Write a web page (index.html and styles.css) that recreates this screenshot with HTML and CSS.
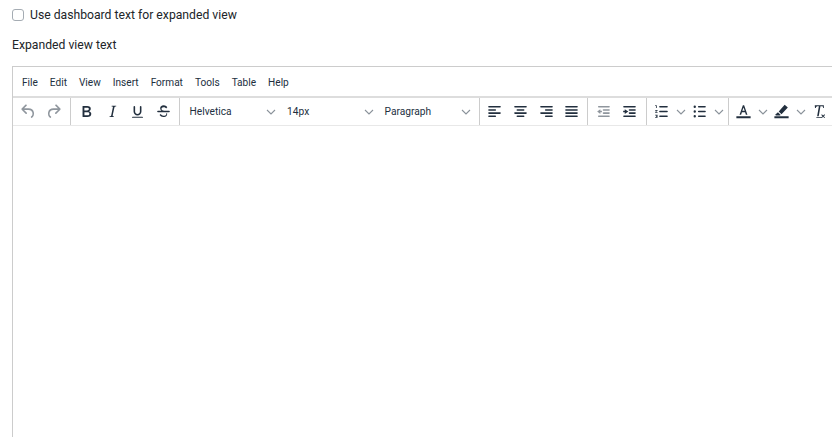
FILE: index.html
```html
<!DOCTYPE html>
<html lang="en">
<head>
    <meta charset="UTF-8">
    <title>Expanded view</title>
    <link rel="stylesheet" href="styles.css">
</head>
<body>
    <label class="check-row"><input type="checkbox" class="check-box"><span>Use dashboard text for expanded view</span></label>
    <div class="field-label">Expanded view text</div>

    <div class="editor">
        <div class="menubar">
            <span>File</span><span>Edit</span><span>View</span><span>Insert</span><span>Format</span><span>Tools</span><span>Table</span><span>Help</span>
        </div>
        <div class="toolbar">
            <div class="group">
                <button class="btn disabled"><svg viewBox="0 0 24 24"><path d="M6.400 8H12c3.700 0 6.200 2 6.800 5.100.6 2.700-.4 5.600-2.300 6.800a1 1 0 0 1-1-1.800c1.100-.6 1.800-2.700 1.400-4.600-.5-2.100-2.100-3.500-4.900-3.500H6.400l3.300 3.300a1 1 0 1 1-1.400 1.400l-5-5a1 1 0 0 1 0-1.400l5-5a1 1 0 0 1 1.400 1.400L6.400 8z"/></svg></button>
                <button class="btn disabled"><svg viewBox="0 0 24 24"><path d="M17.600 8H12c-3.700 0-6.200 2-6.800 5.100-.6 2.700.4 5.600 2.300 6.800a1 1 0 0 0 1-1.800c-1.100-.6-1.800-2.700-1.400-4.600.5-2.100 2.100-3.500 4.900-3.500h5.600l-3.300 3.300a1 1 0 1 0 1.400 1.400l5-5a1 1 0 0 0 0-1.400l-5-5a1 1 0 0 0-1.400 1.400L17.600 8z"/></svg></button>
            </div>
            <div class="group marks">
                <button class="btn"><svg viewBox="0 0 24 24"><path d="M7.800 19c-.3 0-.5 0-.6-.2l-.2-.5V5.700c0-.2 0-.4.2-.5l.6-.2h5c1.500 0 2.700.3 3.500 1 .7.6 1.100 1.400 1.100 2.500a3 3 0 0 1-.6 1.900c-.4.6-1 1-1.600 1.200.4.100.9.300 1.300.6s.8.7 1 1.200c.4.4.5 1 .5 1.600 0 1.300-.4 2.300-1.300 3-.8.7-2.100 1-3.800 1H7.800zm5-8.300c.6 0 1.200-.1 1.600-.5.4-.3.6-.7.6-1.300 0-1.100-.8-1.700-2.300-1.700H9.300v3.500h3.500zm.5 6c.7 0 1.300-.1 1.700-.4.4-.4.6-.9.6-1.500s-.2-1-.7-1.400c-.4-.3-1-.4-2-.4H9.400v3.800h3.900z"/></svg></button>
                <button class="btn"><svg viewBox="0 0 24 24"><path d="M16.700 4.700l-.1.900h-.3c-.6 0-1 0-1.400.3-.3.3-.4.6-.5 1.100l-2.100 9.800v.6c0 .5.4.8 1.400.8h.2l-.2.800H8l.2-.8h.2c1.100 0 1.800-.5 2-1.500l2-9.800.1-.5c0-.6-.4-.8-1.400-.8h-.3l.2-.9h5.800z"/></svg></button>
                <button class="btn"><svg viewBox="0 0 24 24"><path d="M16 5c.6 0 1 .4 1 1v6c0 2.800-2.200 5-5 5s-5-2.200-5-5V6c0-.6.4-1 1-1s1 .4 1 1v6c0 1.700 1.300 3 3 3s3-1.300 3-3V6c0-.6.4-1 1-1zM6 18.500h12c.6 0 1 .3 1 .8s-.4.7-1 .7H6c-.6 0-1-.2-1-.7s.4-.8 1-.8z"/></svg></button>
                <button class="btn"><svg viewBox="0 0 24 24"><path d="M15.600 8.500c-.5-.7-1-1.100-1.300-1.300-.6-.4-1.300-.6-2-.6-2.700 0-2.800 1.700-2.800 2.100 0 1.600 1.800 2 3.200 2.300h-3c-1-.6-1.900-1.500-1.900-3.200 0-2 1.400-3.800 4.500-3.800 1.100 0 2.100.3 3 .9.500.3 1 .9 1.500 1.600l-1.700 1.800zM5 11h14a1 1 0 0 1 0 2H5a1 1 0 0 1 0-2zm11.500 3.200c.1.300.1.600.1.900 0 1.400-.7 3.900-5 3.900A6.200 6.200 0 0 1 7 16.400l1.500-1.100c.4.600 1.600 2 3.700 2 1.600 0 2.500-.4 3-1 .3-.4.400-.9.300-2.100h1z"/></svg></button>
            </div>
            <div class="group selects">
                <div class="select"><span>Helvetica</span><svg class="chevron" viewBox="0 0 10 10"><path d="M1 3l4 4 4-4"/></svg></div>
                <div class="select"><span>14px</span><svg class="chevron" viewBox="0 0 10 10"><path d="M1 3l4 4 4-4"/></svg></div>
                <div class="select"><span>Paragraph</span><svg class="chevron" viewBox="0 0 10 10"><path d="M1 3l4 4 4-4"/></svg></div>
            </div>
            <div class="group">
                <button class="btn"><svg viewBox="0 0 24 24"><path d="M5 5h14a1 1 0 0 1 0 2H5a1 1 0 1 1 0-2zm0 4h8a1 1 0 0 1 0 2H5a1 1 0 1 1 0-2zm0 8h8a1 1 0 0 1 0 2H5a1 1 0 0 1 0-2zm0-4h14a1 1 0 0 1 0 2H5a1 1 0 0 1 0-2z"/></svg></button>
                <button class="btn"><svg viewBox="0 0 24 24"><path d="M5 5h14a1 1 0 0 1 0 2H5a1 1 0 1 1 0-2zm3 4h8a1 1 0 0 1 0 2H8a1 1 0 1 1 0-2zm0 8h8a1 1 0 0 1 0 2H8a1 1 0 0 1 0-2zm-3-4h14a1 1 0 0 1 0 2H5a1 1 0 0 1 0-2z"/></svg></button>
                <button class="btn"><svg viewBox="0 0 24 24"><path d="M5 5h14a1 1 0 0 1 0 2H5a1 1 0 1 1 0-2zm6 4h8a1 1 0 0 1 0 2h-8a1 1 0 0 1 0-2zm0 8h8a1 1 0 0 1 0 2h-8a1 1 0 0 1 0-2zm-6-4h14a1 1 0 0 1 0 2H5a1 1 0 0 1 0-2z"/></svg></button>
                <button class="btn"><svg viewBox="0 0 24 24"><path d="M5 5h14a1 1 0 0 1 0 2H5a1 1 0 1 1 0-2zm0 4h14a1 1 0 0 1 0 2H5a1 1 0 1 1 0-2zm0 4h14a1 1 0 0 1 0 2H5a1 1 0 0 1 0-2zm0 4h14a1 1 0 0 1 0 2H5a1 1 0 0 1 0-2z"/></svg></button>
            </div>
            <div class="group indents">
                <button class="btn disabled"><svg viewBox="0 0 24 24"><path d="M6 5h13a1 1 0 0 1 0 2H6a1 1 0 1 1 0-2zm6 4h7a1 1 0 0 1 0 2h-7a1 1 0 0 1 0-2zm0 4h7a1 1 0 0 1 0 2h-7a1 1 0 0 1 0-2zM6 17h13a1 1 0 0 1 0 2H6a1 1 0 0 1 0-2zM4 12l4-3v2h2v2H8v2z"/></svg></button>
                <button class="btn"><svg viewBox="0 0 24 24"><path d="M5 5h14a1 1 0 0 1 0 2H5a1 1 0 1 1 0-2zm7 4h7a1 1 0 0 1 0 2h-7a1 1 0 0 1 0-2zm0 4h7a1 1 0 0 1 0 2h-7a1 1 0 0 1 0-2zM5 17h14a1 1 0 0 1 0 2H5a1 1 0 0 1 0-2zM10.500 12L6 9v2H4v2h2v2z"/></svg></button>
            </div>
            <div class="group lists">
                <button class="btn split-btn"><svg viewBox="0 0 24 24"><path d="M10 17h9a1 1 0 0 1 0 2h-9a1 1 0 0 1 0-2zm0-6h9a1 1 0 0 1 0 2h-9a1 1 0 0 1 0-2zm0-6h9a1 1 0 0 1 0 2h-9a1 1 0 1 1 0-2zM6 4v3.500H5V5H4V4zm-2 6h3v1l-2 1.500h2v1H4v-1l2-1.500H4zm0 6h3v4H4v-1h2v-.5H5v-1h1V17H4z"/></svg></button>
                <svg class="chevron split" viewBox="0 0 10 10"><path d="M1 3l4 4 4-4"/></svg>
                <button class="btn split-btn"><svg viewBox="0 0 24 24"><path d="M11 5h8a1 1 0 0 1 0 2h-8a1 1 0 0 1 0-2zm0 6h8a1 1 0 0 1 0 2h-8a1 1 0 0 1 0-2zm0 6h8a1 1 0 0 1 0 2h-8a1 1 0 0 1 0-2zM6 4.500a1.500 1.500 0 1 1 0 3 1.500 1.500 0 0 1 0-3zm0 6a1.500 1.500 0 1 1 0 3 1.500 1.500 0 0 1 0-3zm0 6a1.500 1.500 0 1 1 0 3 1.500 1.500 0 0 1 0-3z"/></svg></button>
                <svg class="chevron split" viewBox="0 0 10 10"><path d="M1 3l4 4 4-4"/></svg>
            </div>
            <div class="group last">
                <button class="btn split-btn"><svg viewBox="0 0 24 24"><path d="M3 18h18v2.500H3zM12.800 4h-1.600L7 16h2l1-3h4l1 3h2zm-2.300 7.200L12 6.800l1.500 4.400z"/></svg></button>
                <svg class="chevron split" viewBox="0 0 10 10"><path d="M1 3l4 4 4-4"/></svg>
                <button class="btn split-btn"><svg viewBox="0 0 24 24"><path d="M3 18h18v2.500H3zM16 3.500l4 3.500-8 8.500-3.500-3.500zM7.500 13l3.500 3.300-1 .7H5l-1-.8z"/></svg></button>
                <svg class="chevron split" viewBox="0 0 10 10"><path d="M1 3l4 4 4-4"/></svg>
                <button class="btn split-btn"><svg viewBox="0 0 24 24"><path d="M8 19h7v1H8zM6 4h11.500v3.500h-1C16.400 6 16 5.500 15 5.500h-1.800L11 18H9L11.200 5.500H9.500c-1 0-1.600.6-2.200 2H6.300zM15 15.500l1.600 1.600 1.600-1.600.8.800-1.600 1.600 1.600 1.600-.8.800-1.600-1.600-1.600 1.600-.8-.8 1.600-1.600-1.600-1.600z"/></svg></button>
            </div>
        </div>
        <div class="content"></div>
    </div>
</body>
</html>
```

FILE: styles.css
```css
html, body {
    margin: 0;
    height: 437px;
    overflow: hidden;
    background-color: white;
}

body {
    font-family: Roboto, sans-serif;
    font-size: 12.200px;
    color: #212529;
    padding-left: 12px;
    box-sizing: border-box;
}

.check-row {
    display: flex;
    align-items: center;
    gap: 6px;
    height: 30px;
}

.check-box {
    appearance: none;
    width: 12px;
    height: 12px;
    margin: 0;
    border: 1px solid #a5acb3;
    border-radius: 3px;
    background-color: white;
}

.field-label {
    margin-top: 6px;
    line-height: 18px;
}

.editor {
    margin-top: 12px;
    width: 830px;
    height: 380px;
    border: 1px solid #ccc;
    border-right: none;
    border-bottom: none;
    overflow: hidden;
}

.menubar {
    display: flex;
    gap: 12px;
    align-items: center;
    height: 28px;
    padding: 1px 0 0 9px;
    font-size: 10.100px;
    color: #222f3e;
    border-bottom: 2px solid #ddd;
}

.toolbar {
    display: flex;
    height: 27px;
    border-bottom: 1px solid #e8e8e8;
    font-size: 10.200px;
    color: #222f3e;
}

.group {
    display: flex;
    align-items: center;
    flex: none;
    padding: 0 3px 0 2.500px;
    border-right: 1px solid #ccc;
}

.group.last {
    border-right: none;
}

.group.marks {
    padding: 0 2.500px 0 3px;
}

.group.selects {
    padding: 0 4.500px 0 2px;
}

.group.indents {
    padding-right: 4px;
}

.group.lists {
    padding-right: 2.500px;
}

.btn {
    display: flex;
    justify-content: center;
    align-items: center;
    width: 25.600px;
    height: 24px;
    padding: 0;
    border: none;
    background: none;
}

.btn.split-btn {
    width: 24px;
}

.btn svg {
    width: 19px;
    height: 19px;
    fill: #222f3e;
}

.btn.disabled svg {
    opacity: 0.5;
}

.select {
    display: flex;
    align-items: center;
    justify-content: space-between;
    width: 97.500px;
    box-sizing: border-box;
    padding: 0 3px 0 8px;
}

.chevron {
    width: 10px;
    height: 10px;
    flex: none;
    fill: none;
    stroke: #8a929a;
    stroke-width: 1.100;
}

.chevron.split {
    margin: 0 2px;
}

.content {
    height: 300px;
}
```
